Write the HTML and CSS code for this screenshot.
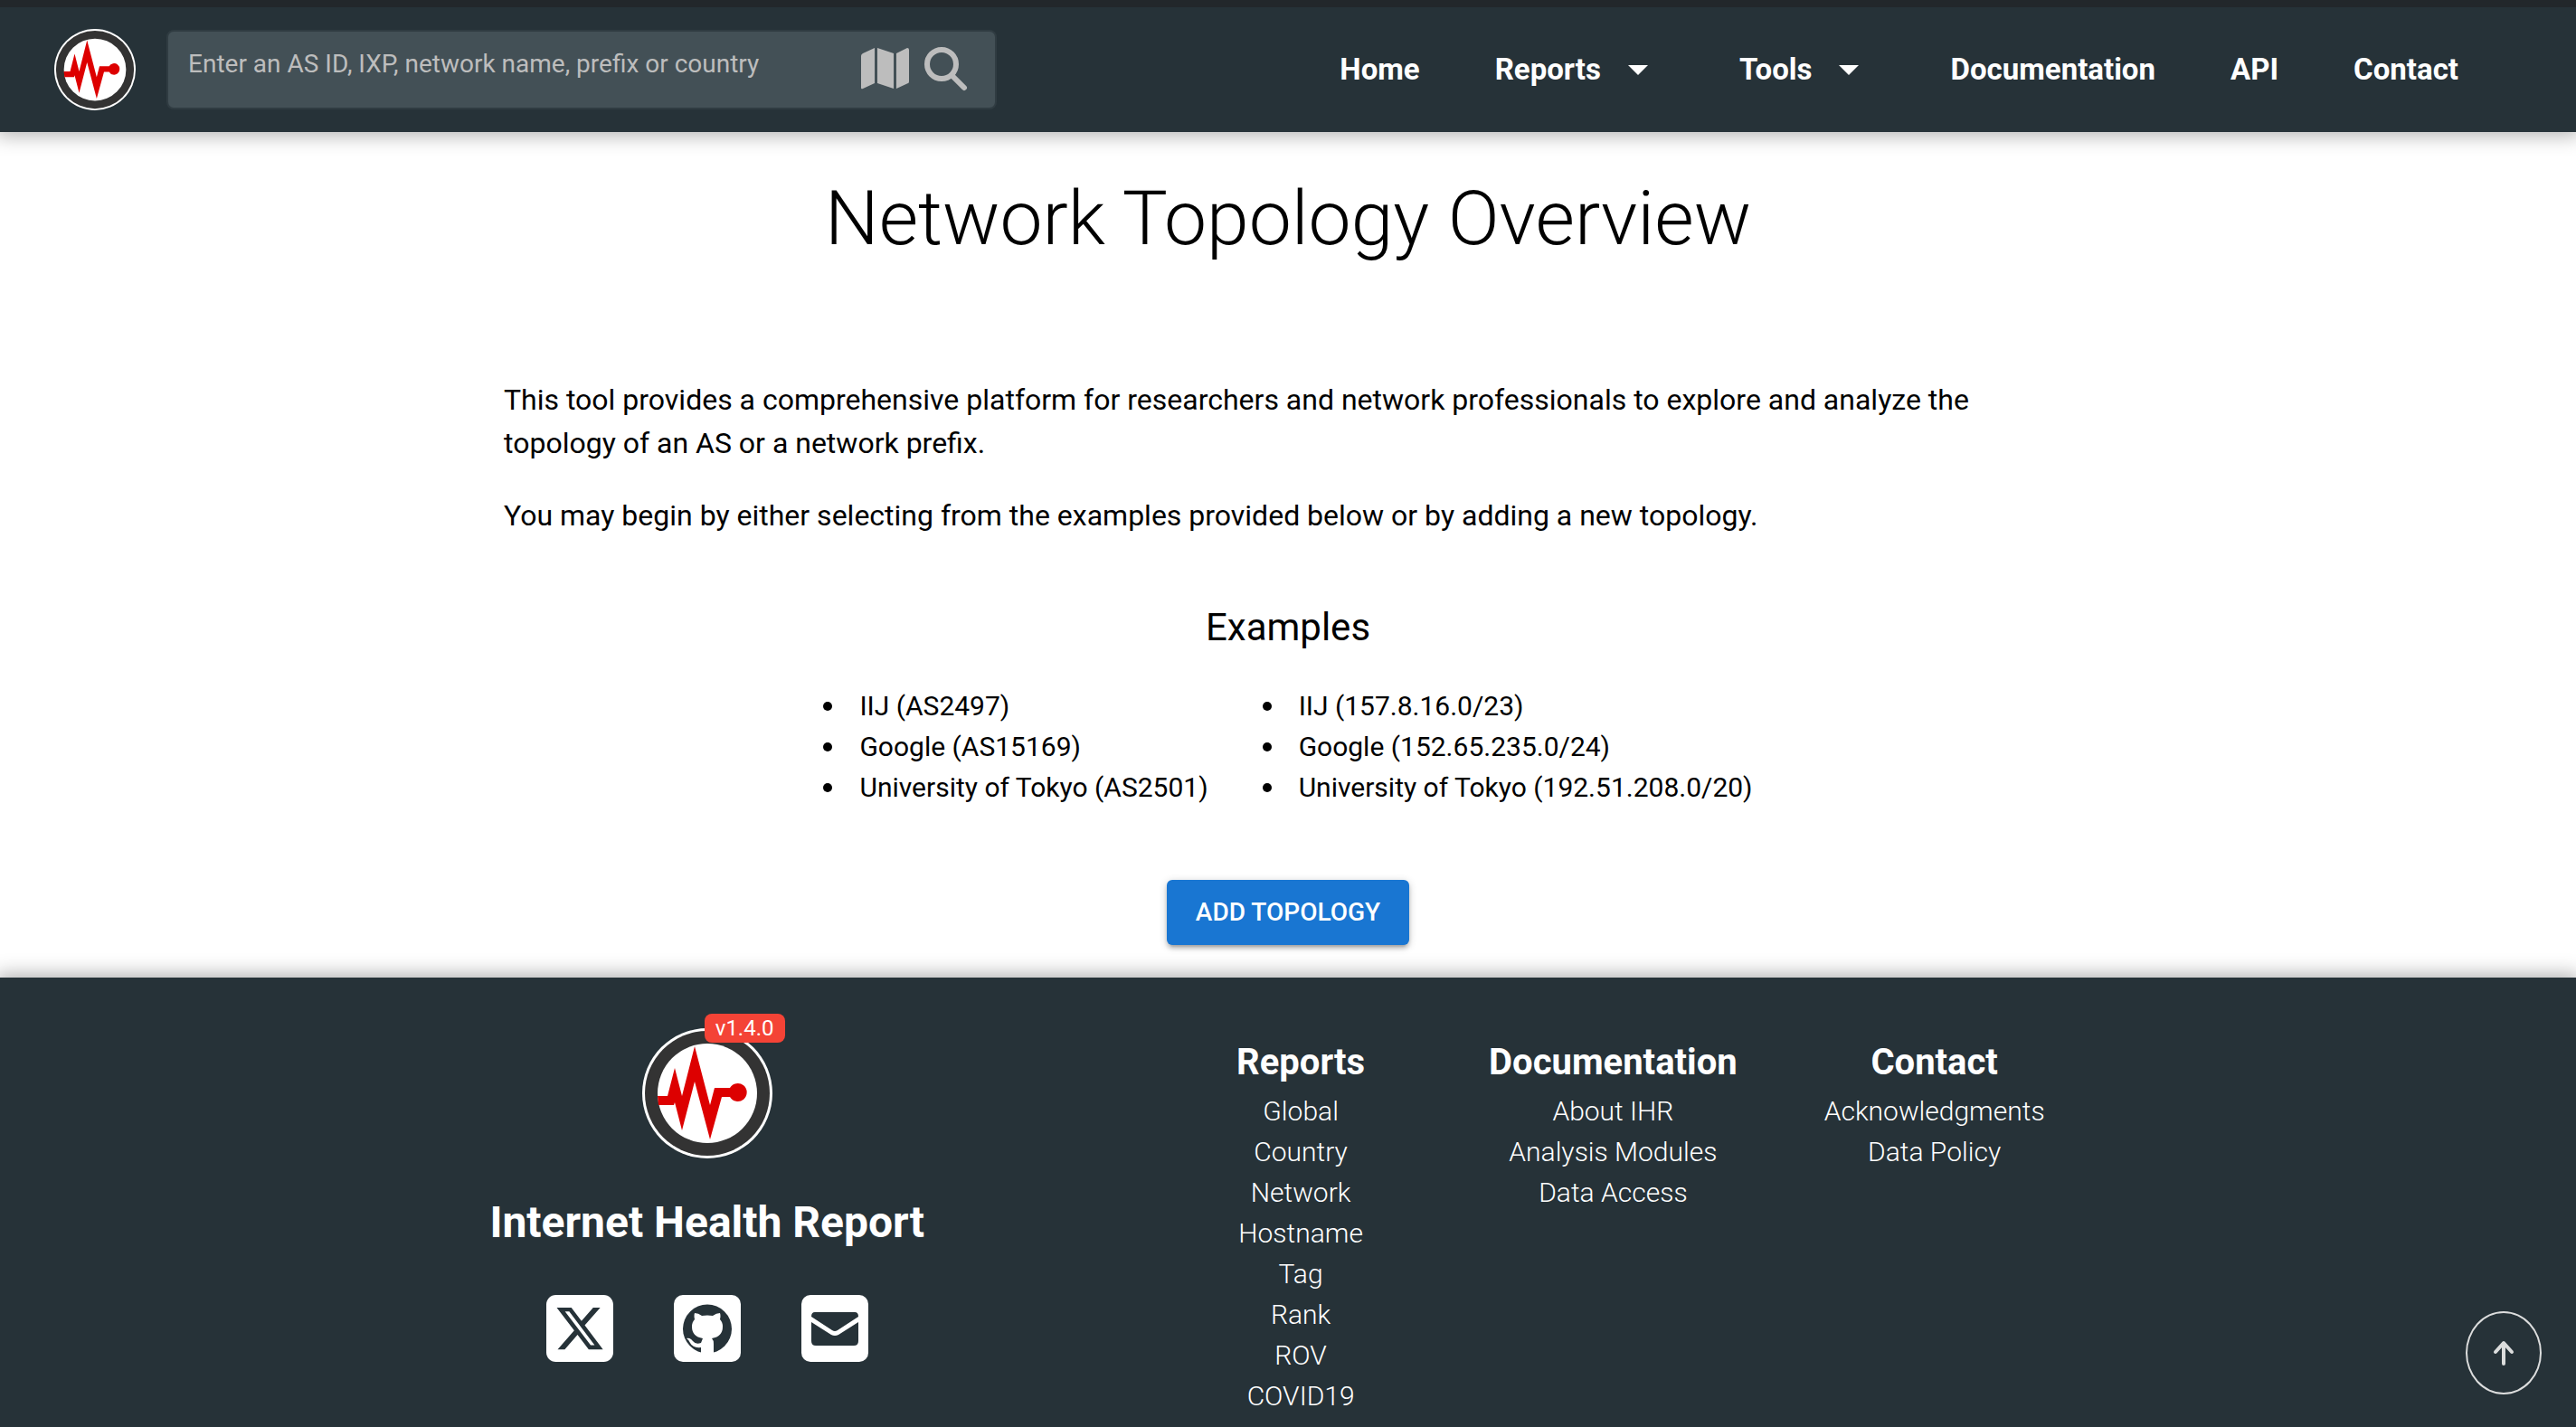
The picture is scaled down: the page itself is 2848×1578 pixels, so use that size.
FILE: index.html
```html
<!DOCTYPE html>
<html lang="en">
<head>
<meta charset="utf-8">
<title>Network Topology Overview | Internet Health Report</title>
<link rel="stylesheet" href="styles.css">
</head>
<body>
<svg class="sprite" aria-hidden="true">
  <symbol id="logo" viewBox="0 0 144 144">
    <circle cx="72" cy="72" r="72" fill="#fff"/>
    <circle cx="72" cy="72" r="69" fill="#333"/>
    <circle cx="72" cy="72" r="55" fill="#fff"/>
    <path fill="#d00" d="M17 75H28L36 44L44 75L58 20L75 85L80 66H97A10 10 0 1 1 97 76H88L75 123L58 59L44 113L36 82L35 85H18Z"/>
  </symbol>
</svg>
<header class="header">
  <a class="brand" href="#" aria-label="Internet Health Report"><svg><use href="#logo"/></svg></a>
  <form class="search" role="search">
    <input type="text" aria-label="Search" placeholder="Enter an AS ID, IXP, network name, prefix or country">
    <button class="icon-btn" type="button" aria-label="Map">
      <svg class="map-icon" viewBox="0 0 54 46"><path d="M1 9q0-2 2-3L16 0v39L3 45q-2 1-2-1zM19 0l18 6v39l-18-6zM40 6l12-6q2 0 2 2v35q0 2-1 2l-13 6z"/></svg>
    </button>
    <button class="icon-btn" type="submit" aria-label="Search">
      <svg class="search-icon" viewBox="0 0 48 50"><circle cx="19" cy="20" r="16" /><path d="M31 33l13 13"/></svg>
    </button>
  </form>
  <nav class="nav">
    <a href="#">Home</a>
    <button type="button">Reports <svg viewBox="0 0 22 11"><path d="M0 0h22L11 11z"/></svg></button>
    <button type="button">Tools <svg viewBox="0 0 22 11"><path d="M0 0h22L11 11z"/></svg></button>
    <a href="#">Documentation</a>
    <a href="#">API</a>
    <a href="#">Contact</a>
  </nav>
</header>
<main class="main">
  <h1>Network Topology Overview</h1>
  <div class="intro">
    <p>This tool provides a comprehensive platform for researchers and network professionals to explore and analyze the topology of an AS or a network prefix.</p>
    <p>You may begin by either selecting from the examples provided below or by adding a new topology.</p>
  </div>
  <h2>Examples</h2>
  <div class="examples">
    <ul>
      <li><a href="#">IIJ (AS2497)</a></li>
      <li><a href="#">Google (AS15169)</a></li>
      <li><a href="#">University of Tokyo (AS2501)</a></li>
    </ul>
    <ul>
      <li><a href="#">IIJ (157.8.16.0/23)</a></li>
      <li><a href="#">Google (152.65.235.0/24)</a></li>
      <li><a href="#">University of Tokyo (192.51.208.0/20)</a></li>
    </ul>
  </div>
  <button class="add" type="button">ADD TOPOLOGY</button>
</main>
<footer class="footer">
  <div class="about">
    <div class="about-logo">
      <svg><use href="#logo"/></svg>
      <span class="version">v1.4.0</span>
    </div>
    <p class="name">Internet Health Report</p>
    <div class="social">
      <a href="#" aria-label="X"><svg viewBox="0 32 448 448"><path d="M64 32C28.700 32 0 60.700 0 96V416c0 35.300 28.700 64 64 64H384c35.300 0 64-28.700 64-64V96c0-35.300-28.700-64-64-64H64zm297.100 84L257.300 234.600 379.400 396H283.800L209 298.100 123.300 396H75.800l111-126.900L69.700 116h98l67.700 89.500L313.600 116h47.500zM323.300 367.600L153.400 142.900H125.100L296.900 367.600h26.300z"/></svg></a>
      <a href="#" aria-label="GitHub"><svg viewBox="0 0 74 74"><rect width="74" height="74" rx="10"/><circle class="cut" cx="37" cy="37.500" r="27"/><path d="M30 66V58q-9 1-12-5-1-3-4-5 4-1 7 3 3 4 9 2l2-5q-12-2-12-13 0-5 3-8-1-4 0-7 4 0 8 3 6-1 12 0 4-3 8-3 1 3 0 7 3 3 3 8 0 11-12 13 2 2 2 6v12z"/></svg></a>
      <a href="#" aria-label="Email"><svg viewBox="0 0 74 74"><rect width="74" height="74" rx="10"/><path class="cut" d="M15 19h44q4 0 4 5L40 39q-3 2-6 0L11 24q0-5 4-5zM11 30l22 14q4 2 8 0l22-14v21q0 5-5 5H16q-5 0-5-5z"/></svg></a>
    </div>
  </div>
  <nav class="links" aria-label="Footer">
    <section><h3>Reports</h3><a href="#">Global</a><a href="#">Country</a><a href="#">Network</a><a href="#">Hostname</a><a href="#">Tag</a><a href="#">Rank</a><a href="#">ROV</a><a href="#">COVID19</a></section>
    <section><h3>Documentation</h3><a href="#">About IHR</a><a href="#">Analysis Modules</a><a href="#">Data Access</a></section>
    <section><h3>Contact</h3><a href="#">Acknowledgments</a><a href="#">Data Policy</a></section>
  </nav>
</footer>
<button class="to-top" type="button" aria-label="Back to top"><svg viewBox="0 0 24 28"><path d="M12 26V4M3 13l9-10 9 10"/></svg></button>
</body>
</html>
```
FILE: styles.css
```css
* { box-sizing: border-box; }
body { margin: 0; font-family: Roboto, sans-serif; font-size: 32px; line-height: 48px; color: #000; background: #fff; }
a { color: inherit; text-decoration: none; }
button { font: inherit; color: inherit; background: none; border: 0; padding: 0; cursor: pointer; }
svg { display: block; }
h1, h2, h3, p, ul { margin: 0; padding: 0; }
.sprite { position: absolute; width: 0; height: 0; }

.header { position: relative; display: flex; align-items: center; height: 146px; padding: 0 130px 0 60px; border-top: 8px solid #22272b; background: #263238; box-shadow: 0 0 20px 4px rgba(0, 0, 0, .3); color: #fff; }
.brand svg { width: 90px; height: 90px; }
.search { display: flex; align-items: center; gap: 17px; width: 918px; height: 88px; margin-left: 34px; padding: 0 30px 2px 22px; border: 2px solid #303c42; border-radius: 8px; background: #435056; }
.search input { flex: 1; min-width: 0; padding: 0 0 10px; border: 0; outline: 0; background: none; font: inherit; font-size: 28px; color: #fff; }
.search input::placeholder { color: #bdbdbd; opacity: 1; }
.map-icon { width: 54px; height: 46px; fill: #bdbdbd; }
.search-icon { width: 48px; height: 50px; fill: none; stroke: #bdbdbd; stroke-width: 6; stroke-linecap: round; }
.nav { display: flex; gap: 83px; margin-left: auto; font-size: 33px; font-weight: 700; }
.nav button { display: flex; align-items: center; gap: 30px; padding-right: 18px; }
.nav svg { width: 22px; height: 11px; fill: #fff; }

.main { display: flex; flex-direction: column; align-items: center; padding: 36px 0; }
h1 { font-size: 84px; font-weight: 300; line-height: 120px; }
.intro { display: grid; gap: 32px; width: 1734px; max-width: 90%; margin-top: 116px; }
h2 { margin-top: 68px; font-size: 42px; font-weight: 400; line-height: 64px; }
.examples { display: flex; gap: 60px; margin-top: 32px; font-size: 30px; line-height: 45px; }
.examples ul { list-style: none; }
.examples li { display: flex; align-items: center; gap: 30px; }
.examples li::before { content: ""; width: 10px; height: 10px; border-radius: 50%; background: #000; }
.add { margin-top: 80px; padding: 0 32px; border-radius: 6px; background: #1976d2; box-shadow: 0 2px 10px rgba(0, 0, 0, .2), 0 4px 4px rgba(0, 0, 0, .14), 0 6px 2px -4px rgba(0, 0, 0, .12); color: #fff; font-size: 28px; font-weight: 500; line-height: 72px; }

.footer { display: flex; justify-content: center; gap: 304px; padding: 40px 46px 16px 0; background: #263238; box-shadow: 0 0 20px 4px rgba(0, 0, 0, .3); color: #fff; }
.about { display: flex; flex-direction: column; align-items: center; }
.about-logo { position: relative; margin-top: 16px; }
.about-logo svg { width: 144px; height: 144px; }
.version { position: absolute; top: -16px; left: 69px; padding: 4px 12px; border-radius: 8px; background: #f44336; font-size: 24px; line-height: 24px; }
.name { margin-top: 36px; font-size: 48px; font-weight: 700; line-height: 70px; }
.social { display: flex; gap: 67px; margin-top: 45px; }
.social svg { width: 74px; height: 74px; fill: #fff; }
.social .cut { fill: #263238; }
.links { display: flex; gap: 96px; margin-top: 23px; font-size: 30px; font-weight: 300; line-height: 45px; text-align: center; }
.links section { display: flex; flex-direction: column; min-width: 224px; }
.links h3 { font-size: 40px; font-weight: 700; line-height: 62px; }
.to-top { position: fixed; right: 38px; bottom: 36px; display: grid; place-items: center; width: 84px; height: 92px; border: 2px solid #dcdddd; border-radius: 50%; }
.to-top svg { width: 24px; height: 28px; fill: none; stroke: #dcdddd; stroke-width: 4; stroke-linecap: round; stroke-linejoin: round; }
```
